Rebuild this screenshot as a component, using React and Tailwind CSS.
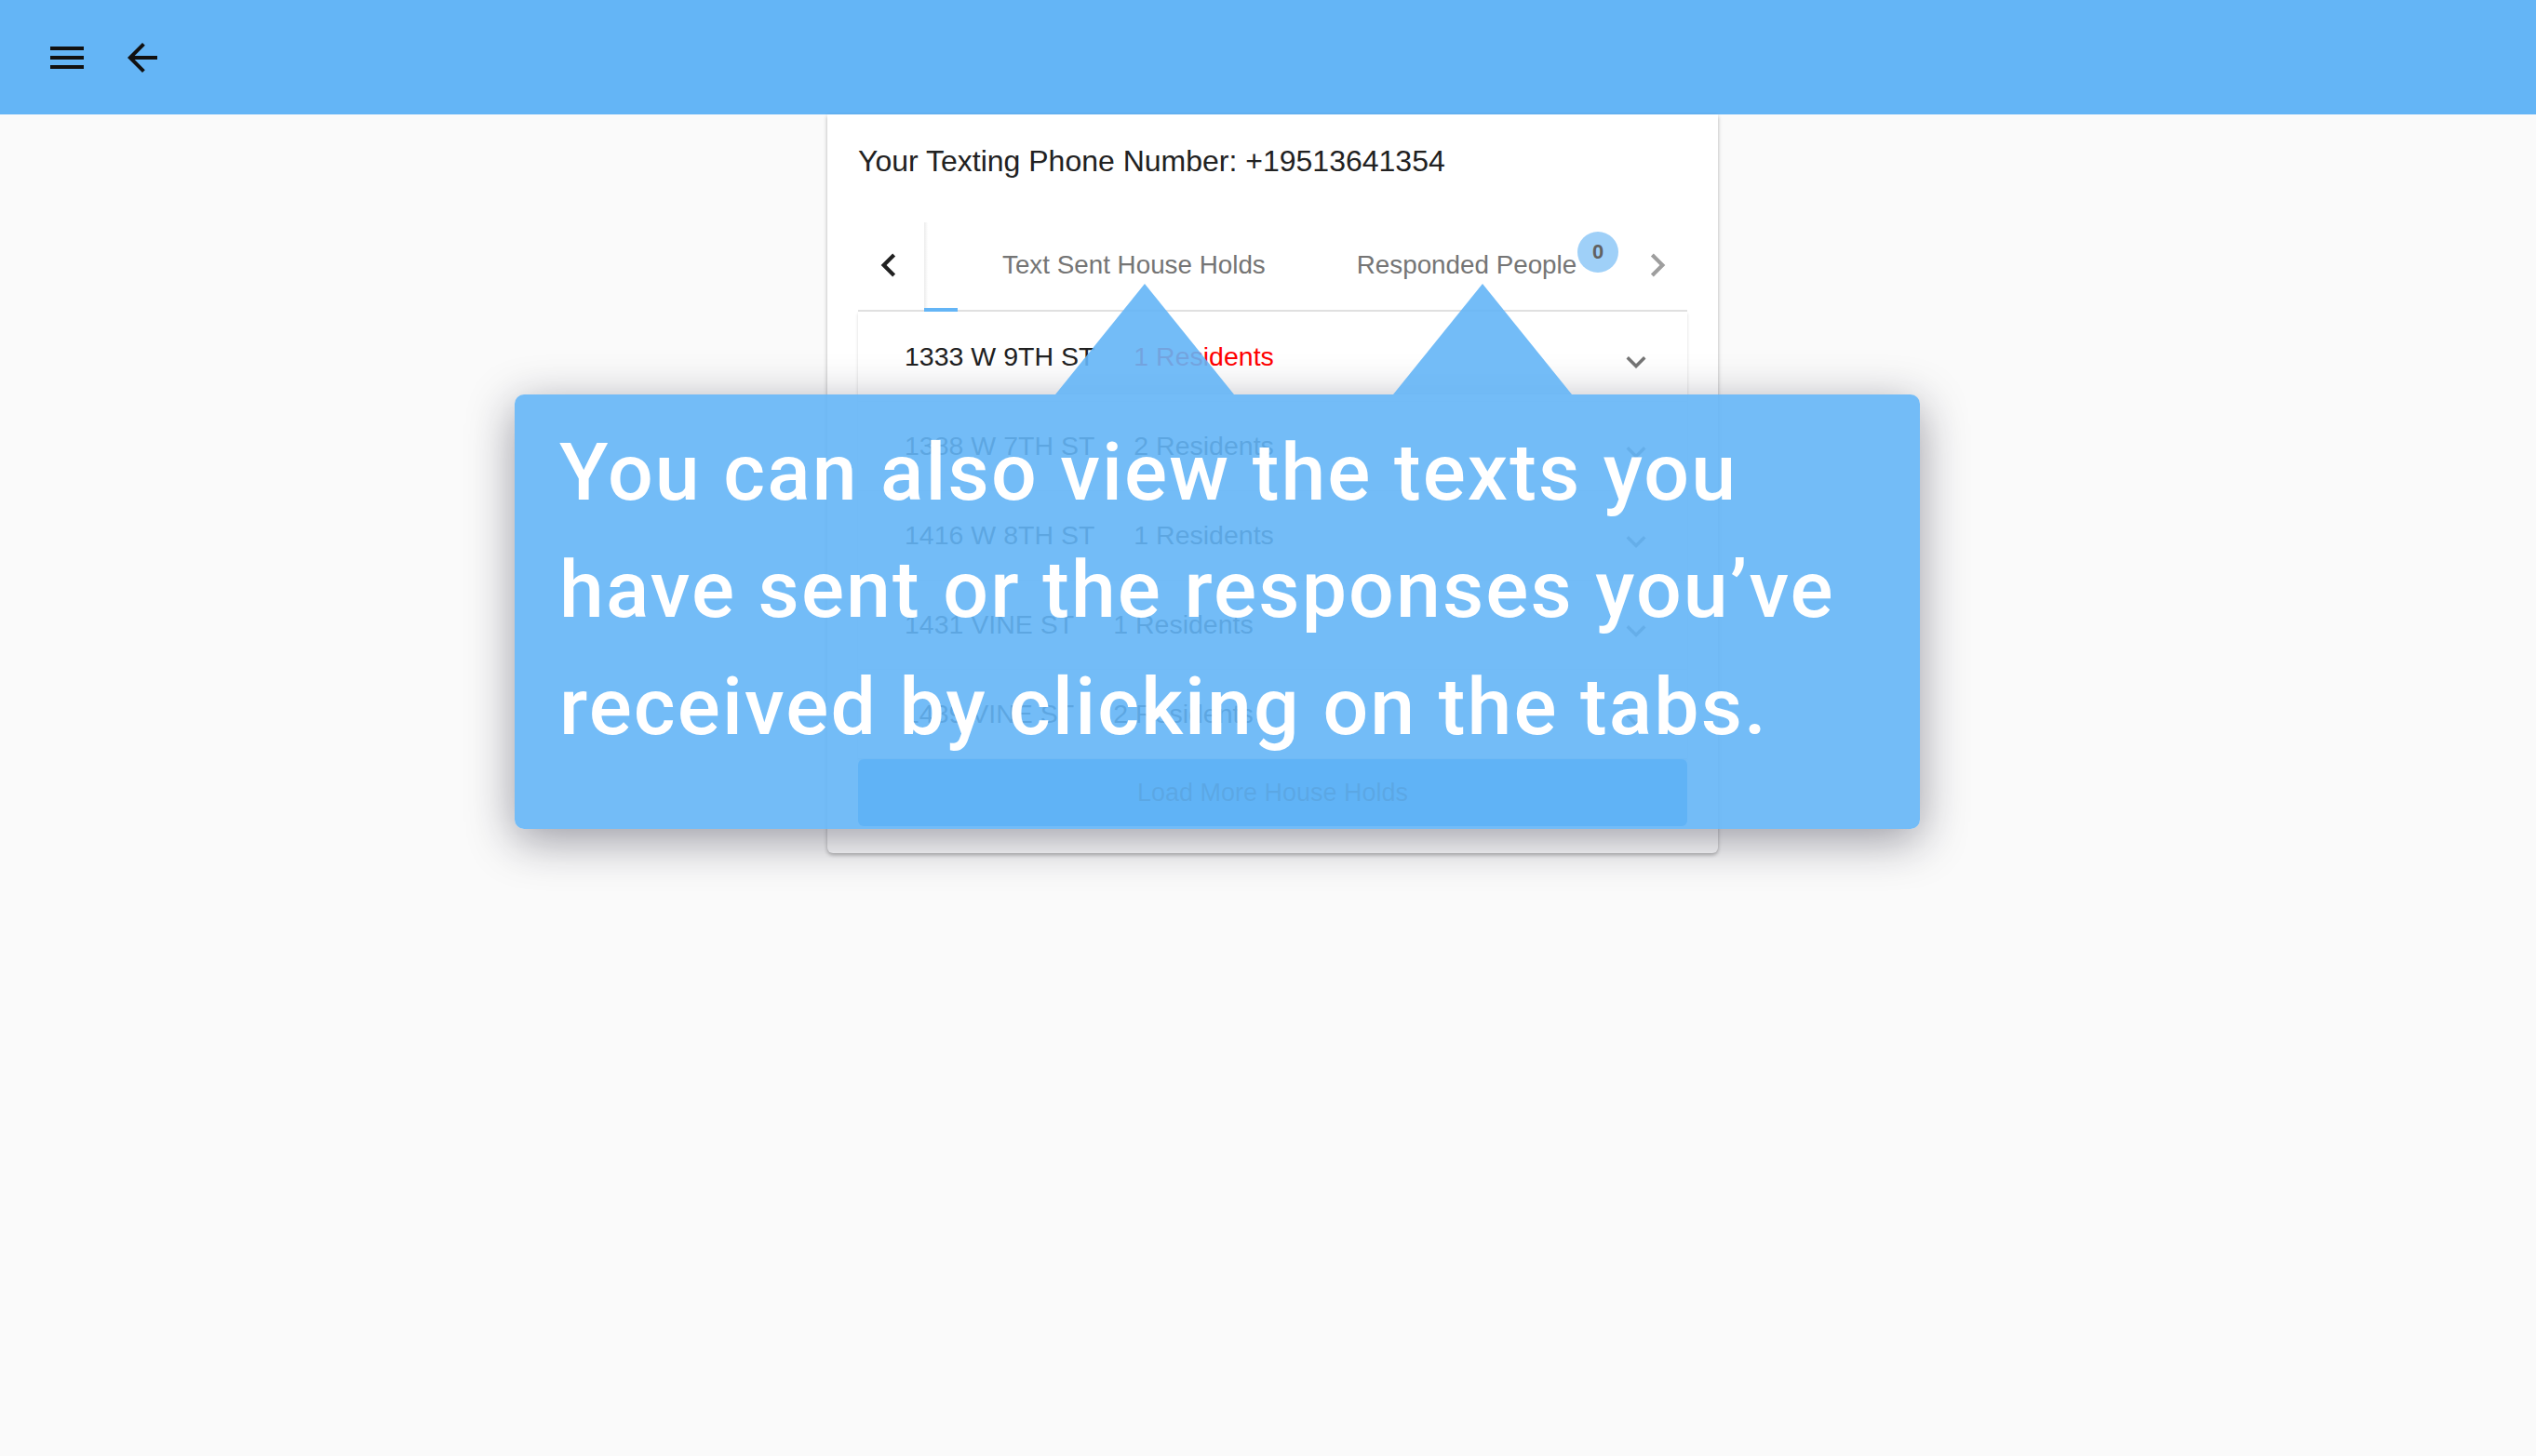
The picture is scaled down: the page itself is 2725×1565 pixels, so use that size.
import React from 'react';
import { MdMenu, MdArrowBack, MdKeyboardArrowLeft, MdKeyboardArrowRight, MdExpandMore } from 'react-icons/md';

const houseHolds = [
  { address: '1333 W 9TH ST', residents: 1, hot: true },
  { address: '1388 W 7TH ST', residents: 2 },
  { address: '1416 W 8TH ST', residents: 1 },
  { address: '1431 VINE ST', residents: 1 },
  { address: '1439 VINE ST', residents: 2 },
];

function HouseHoldRow({ item }) {
  return (
    <div className="h-[96px] flex items-center pl-[50px] pr-[34px] bg-white shadow-[0_2px_3px_rgba(0,0,0,0.16)] border-t border-[#eeeeee] first:border-t-0">
      <span className="text-[#212121]">{item.address}</span>
      <span className={item.hot ? 'ml-[42px] text-[#ff0000]' : 'ml-[42px] text-[#212121]'}>{item.residents} Residents</span>
      <span className="ml-auto pt-[12px] text-[#757575]">
        <MdExpandMore size={42} />
      </span>
    </div>
  );
}

function Tour() {
  return (
    <div className="absolute left-[553px] top-[424px] w-[1510px] h-[467px] rounded-[10px] bg-[rgba(100,181,246,0.9)] shadow-[0_12px_50px_rgba(20,20,40,0.42)]">
      {/* arrows pointing at the two tabs */}
      <svg className="absolute left-[581px] bottom-full" width="192" height="119" viewBox="0 0 192 119">
        <polygon points="0,119 96,0 192,119" fill="rgba(100,181,246,0.9)" />
      </svg>
      <svg className="absolute left-[944px] bottom-full" width="192" height="119" viewBox="0 0 192 119">
        <polygon points="0,119 96,0 192,119" fill="rgba(100,181,246,0.9)" />
      </svg>
      <div className="pl-[48px] pt-[21px] text-white font-['Roboto',sans-serif] font-medium text-[86px] leading-[126px] tracking-[2.1px]">
        <div>You can also view the texts you</div>
        <div>have sent or the responses you’ve</div>
        <div>received by clicking on the tabs.</div>
      </div>
    </div>
  );
}

export default function App() {
  return (
    <div className="relative min-h-screen bg-[#fafafa] font-['Liberation_Sans',Arial,sans-serif]">
      <header className="h-[123px] bg-[#64b5f6] flex items-center pl-[48px] gap-[33px] text-[#111]">
        <MdMenu size={48} />
        <MdArrowBack size={48} />
      </header>

      <main className="flex justify-center pl-[10px]">
        <div className="w-[957px] bg-white rounded-b-[6px] shadow-[0_2px_4px_rgba(0,0,0,0.3)] px-[33px] pt-[30px] pb-[29px]">
          <div className="text-[32px] leading-[40px] text-[#212121]">Your Texting Phone Number: +19513641354</div>

          <div className="mt-[46px] h-[96px] flex border-b-2 border-[#e0e0e0]">
            <div className="w-[71px] flex items-center pl-[8px] pb-[2px] text-[#212121]">
              <MdKeyboardArrowLeft size={50} />
            </div>
            <div className="relative flex-1 flex items-center pb-[3px] text-[27.8px] leading-[32px] text-[#757575]">
              <div className="absolute left-0 top-0 bottom-0 w-[4px] bg-gradient-to-r from-[rgba(0,0,0,0.08)] to-transparent" />
              <div className="absolute left-0 bottom-[-2px] w-[36px] h-[4px] bg-[#64b5f6]" />
              <span className="ml-[84px]">Text Sent House Holds</span>
              <span className="relative ml-[98px]">
                Responded People
                <span className="absolute left-[calc(100%+1px)] top-[-20px] w-[44px] h-[44px] rounded-full bg-[#9fd0f8] flex items-center justify-center text-[22px] font-bold text-[#616161]">0</span>
              </span>
            </div>
            <div className="w-[65px] flex items-center justify-center pb-[2px] text-[#9e9e9e]">
              <MdKeyboardArrowRight size={50} />
            </div>
          </div>

          <div className="text-[28.5px]">
            {houseHolds.map((h) => (
              <HouseHoldRow key={h.address} item={h} />
            ))}
          </div>

          <button className="mt-[1px] w-full h-[72px] rounded-[6px] bg-[#42a5f5] text-[27px] text-[rgba(0,0,0,0.75)]">
            Load More House Holds
          </button>
        </div>
      </main>

      <Tour />
    </div>
  );
}
